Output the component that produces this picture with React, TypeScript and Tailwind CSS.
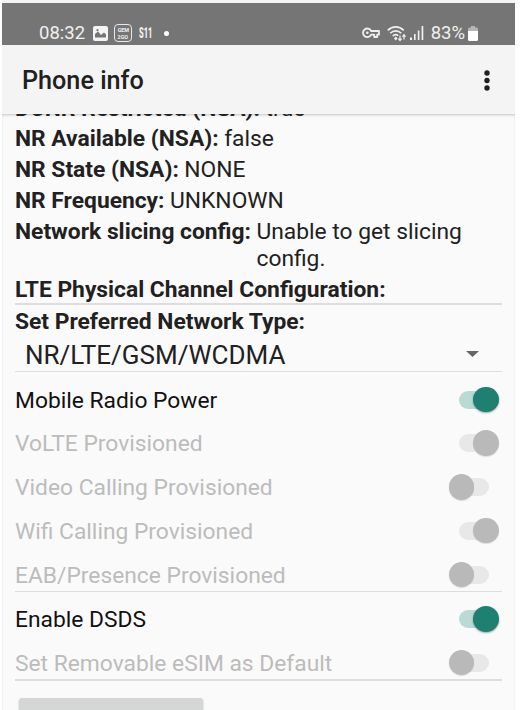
import React from 'react';

interface ToggleRow {
    label: string;
    on: boolean;
    disabled?: boolean;
}

const radioRows: ToggleRow[] = [
    { label: 'Mobile Radio Power', on: true },
    { label: 'VoLTE Provisioned', on: true, disabled: true },
    { label: 'Video Calling Provisioned', on: false, disabled: true },
    { label: 'Wifi Calling Provisioned', on: true, disabled: true },
    { label: 'EAB/Presence Provisioned', on: false, disabled: true },
];

const simRows: ToggleRow[] = [
    { label: 'Enable DSDS', on: true },
    { label: 'Set Removable eSIM as Default', on: false, disabled: true },
];

const Switch: React.FC<{ on: boolean; disabled?: boolean }> = ({ on, disabled }) => {
    const track = on && !disabled ? 'bg-[#b9dad5]' : 'bg-[#e8e8e8]';
    const thumb = disabled ? 'bg-[#b9b9b9] shadow-[0_1px_1px_rgba(0,0,0,0.12)]' : 'bg-[#1d8071] shadow-[0_1px_2px_rgba(0,0,0,0.35)]';

    return (
        <div className="relative flex h-[26px] w-[50px] items-center justify-center">
            <div className={`h-[18px] w-[30px] rounded-full ${track}`}></div>
            <div className={`absolute top-0 size-[25.5px] rounded-full ${on ? 'right-0' : 'left-0'} ${thumb}`}></div>
        </div>
    );
};

const ToggleList: React.FC<{ rows: ToggleRow[] }> = ({ rows }) => (
    <div className="flex flex-col gap-[16.75px] pr-[3.5px]">
        {rows.map((row) => (
            <div key={row.label} className="flex h-[27px] items-center justify-between">
                <span className={`pt-px ${row.disabled ? 'text-[#bcbcbc]' : 'text-[#111111]'}`}>{row.label}</span>
                <Switch on={row.on} disabled={row.disabled} />
            </div>
        ))}
    </div>
);

const Divider: React.FC = () => <div className="h-[1.5px] shrink-0 bg-[#dddddd]"></div>;

const InfoRow: React.FC<{ label: string; value?: string }> = ({ label, value }) => (
    <div className="flex gap-[5.5px]">
        <span className="shrink-0 font-bold">{label}</span>
        {value && <span className="w-[225px]">{value}</span>}
    </div>
);

const StatusBar: React.FC = () => (
    <div className="flex h-[42px] shrink-0 items-end justify-between bg-[#757575] pr-[37px] pb-[2px] pl-[37px] text-[#f0f0f0]">
        <div className="flex h-5 items-center">
            <span className="w-[46px] text-[18.5px] leading-5">08:32</span>
            <svg className="ml-[8px] h-[15px] w-[15px]" viewBox="0 0 15 15">
                <rect width="15" height="15" rx="2" fill="#f4f4f4" />
                <path d="M2 11.5V8l3-2.5 3 3.5 3-2.5 2 2v3z" fill="#757575" />
                <circle cx="4.5" cy="4.2" r="1.1" fill="#757575" />
            </svg>
            <div className="ml-[6px] flex h-[18px] w-[18px] shrink-0 flex-col items-center justify-center rounded-[4px] border border-[#e8e8e8] text-[6px] leading-[7px] font-bold">
                <span className="scale-x-90">GEM</span>
                <span className="scale-x-90">2GO</span>
            </div>
            <span className="ml-[7px] w-[14px] origin-left scale-x-50 text-[15px] font-black">S11</span>
            <span className="ml-[11px] size-[5px] rounded-full bg-white"></span>
        </div>
        <div className="flex h-5 items-center">
            <svg className="h-[12px] w-[18px]" viewBox="0 0 18 12" fill="none" stroke="#f0f0f0" strokeWidth="1.8">
                <path d="M9.2 4H17v3.6h-1.8V10h-3V7.6h-3A4.3 4.3 0 1 1 9.2 4z" strokeLinejoin="round" />
                <circle cx="5.3" cy="5.8" r="1.3" fill="#f0f0f0" stroke="none" />
            </svg>
            <svg className="ml-[7px] h-[17px] w-[20px]" viewBox="0 0 20 17" fill="none" stroke="#f0f0f0" strokeWidth="1.6">
                <path d="M.8 5.4C5.5.7 12 .7 16.7 5.4M3.2 8.3C6.5 5 11 5 14.3 8.3M5.7 11C7.5 9.2 9.5 9.2 11.2 10.6" />
                <path d="M8.8 11.6l1.8 1.9-1.8 1.9L7 13.5z" fill="#f0f0f0" stroke="none" />
                <path d="M13 10.5v4.8M11.4 13.6l1.6 1.9 1.6-1.9M17 14.6V9.8M15.4 11.6L17 9.7l1.6 1.9" strokeWidth="1.2" />
            </svg>
            <svg className="ml-[3px] h-[14px] w-[14px]" viewBox="0 0 14 14" fill="#f0f0f0">
                <path d="M0 11.5h2V14H0zM4 8h1.6v6H4zM7.8 4.5h1.6V14H7.8zM11.6 0h1.7v14h-1.7z" />
            </svg>
            <span className="ml-[7px] text-[18.5px] leading-5">83%</span>
            <svg className="ml-[3px] h-[15px] w-[10px]" viewBox="0 0 10 15">
                <path d="M3 0h4v1.5h1.5A1.5 1.5 0 0 1 10 3v3H0V3a1.5 1.5 0 0 1 1.5-1.5H3z" fill="#b5b5b5" />
                <path d="M0 5h10v8.5a1.5 1.5 0 0 1-1.5 1.5h-7A1.5 1.5 0 0 1 0 13.5z" fill="#ffffff" />
            </svg>
        </div>
    </div>
);

export default function App() {
    return (
        <div className="h-[710px] w-[521px] overflow-hidden bg-white pl-[2px] font-['Roboto',sans-serif]">
            <div className="flex h-full w-[513px] flex-col bg-[#fafafa]">
                <div className="h-[3px] shrink-0 bg-[#f4f4f4]"></div>
                <StatusBar />
                <div className="flex h-[69px] shrink-0 items-center justify-between bg-[#f4f4f4] pt-px pr-[25px] pl-[20px]">
                    <h1 className="pt-[2px] text-[25.2px] font-medium text-[#202020]">Phone info</h1>
                    <svg className="h-[21px] w-[6px]" viewBox="0 0 6 21" fill="#202020">
                        <circle cx="3" cy="3" r="2.7" />
                        <circle cx="3" cy="10.5" r="2.7" />
                        <circle cx="3" cy="18" r="2.7" />
                    </svg>
                </div>

                <div className="flex-1 overflow-hidden px-[13px] text-[22.8px] leading-[27px] text-[#212121] shadow-[inset_0_2px_3px_-1px_rgba(0,0,0,0.22)]">
                    <div className="-mt-[19px] mb-[3px]">
                        <InfoRow label="DCNR Restricted (NSA):" value="true" />
                    </div>
                    <div className="flex flex-col gap-1">
                        <InfoRow label="NR Available (NSA):" value="false" />
                        <InfoRow label="NR State (NSA):" value="NONE" />
                        <InfoRow label="NR Frequency:" value="UNKNOWN" />
                        <InfoRow label="Network slicing config:" value="Unable to get slicing config." />
                        <InfoRow label="LTE Physical Channel Configuration:" />
                    </div>
                    <Divider />
                    <div className="mt-[3px] font-bold">Set Preferred Network Type:</div>
                    <div className="mt-[3px] mb-px flex h-[32px] items-center justify-between pr-[23px] pl-[10px]">
                        <span className="pt-[3px] text-[26px]">NR/LTE/GSM/WCDMA</span>
                        <svg className="h-[6px] w-[13px]" viewBox="0 0 13 6" fill="#666666">
                            <path d="M0 0h13L6.5 6z" />
                        </svg>
                    </div>
                    <Divider />
                    <div className="mt-[14px] mb-[2.5px]">
                        <ToggleList rows={radioRows} />
                    </div>
                    <Divider />
                    <div className="mt-[13.5px] mb-[3px]">
                        <ToggleList rows={simRows} />
                    </div>
                    <Divider />
                    <div className="mt-[17px] ml-1 h-[50px] w-[184px] rounded-[3px] bg-[#d5d7d6] shadow-[0_1px_2px_rgba(0,0,0,0.25)]"></div>
                </div>
            </div>
        </div>
    );
}
